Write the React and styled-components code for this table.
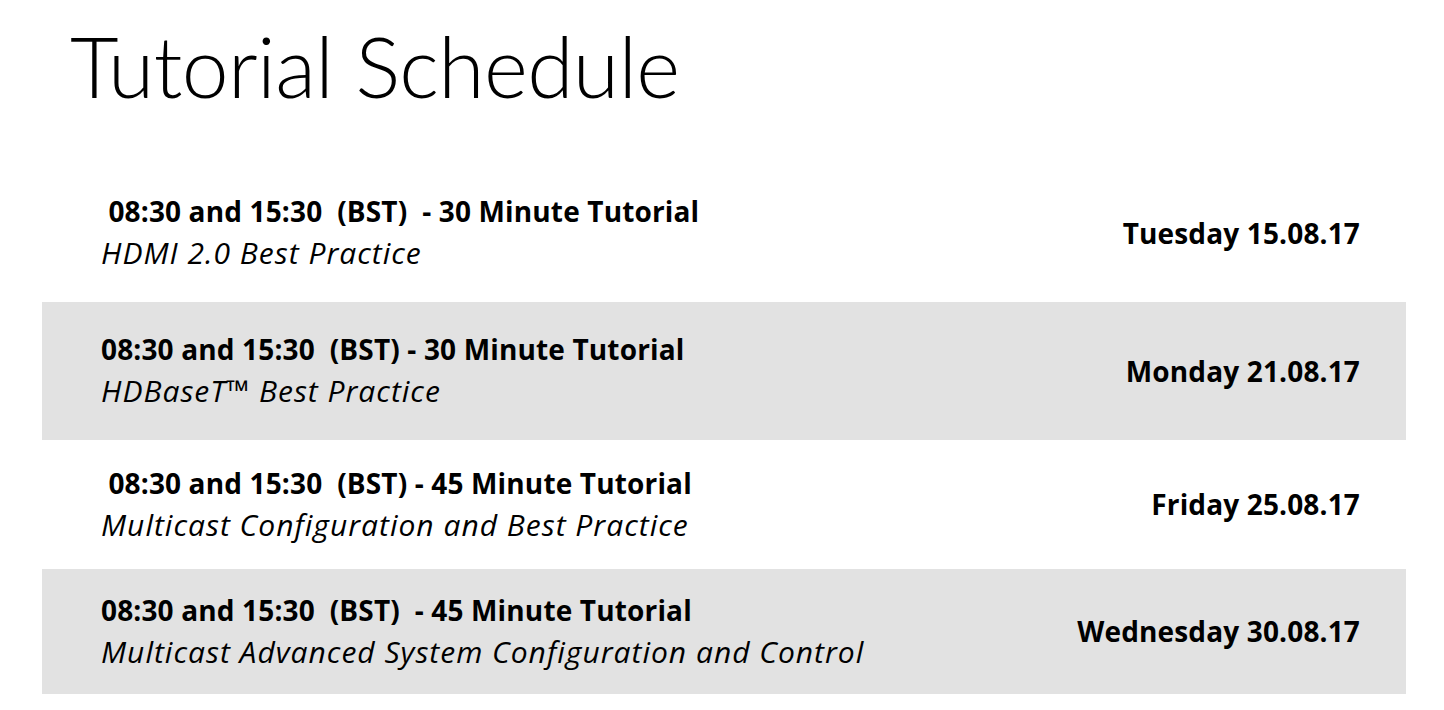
import React from "react";
import styled, { createGlobalStyle } from "styled-components";

const GlobalStyle = createGlobalStyle`
  html, body {
    margin: 0;
    padding: 0;
    background: #ffffff;
    color: #000000;
    font-family: "Open Sans", "Noto Sans", sans-serif;
  }
`;

const Page = styled.main`
  width: 1444px;
  min-height: 710px;
  background: #ffffff;
`;

const Header = styled.header`
  height: 164px;
  box-sizing: border-box;
  padding: 24px 0 0 70px;
`;

const Title = styled.h1`
  margin: 0;
  font-family: "Lato", "Open Sans", sans-serif;
  font-weight: 300;
  font-size: 84px;
  line-height: 84px;
  letter-spacing: -0.6px;
  color: #000000;
`;

const List = styled.section`
  display: flex;
  flex-direction: column;
  margin: 0 38px 0 42px;
`;

const Row = styled.div`
  display: flex;
  align-items: center;
  justify-content: space-between;
  height: ${(p) => p.$height}px;
  box-sizing: border-box;
  padding: 0 46px 0 59px;
  background: ${(p) => (p.$shaded ? "#e2e2e2" : "transparent")};
`;

const Info = styled.div`
  display: flex;
  flex-direction: column;
  padding-bottom: 2px;
`;

const Time = styled.div`
  font-weight: 700;
  font-size: 28px;
  line-height: 42px;
  letter-spacing: 0.15px;
  white-space: pre;
`;

const Topic = styled.div`
  font-style: italic;
  font-weight: 400;
  font-size: 30px;
  line-height: 42px;
  letter-spacing: 1px;
  white-space: pre;
`;

const DateLabel = styled.div`
  font-weight: 700;
  font-size: 28px;
  line-height: 43px;
  letter-spacing: 0.15px;
  white-space: pre;
`;

const sessions = [
  {
    time: " 08:30 and 15:30  (BST)  - 30 Minute Tutorial",
    topic: "HDMI 2.0 Best Practice",
    date: "Tuesday 15.08.17",
    height: 138,
  },
  {
    time: "08:30 and 15:30  (BST) - 30 Minute Tutorial",
    topic: "HDBaseT\u2122 Best Practice",
    date: "Monday 21.08.17",
    height: 138,
    shaded: true,
  },
  {
    time: " 08:30 and 15:30  (BST) - 45 Minute Tutorial",
    topic: "Multicast Configuration and Best Practice",
    date: "Friday 25.08.17",
    height: 129,
  },
  {
    time: "08:30 and 15:30  (BST)  - 45 Minute Tutorial",
    topic: "Multicast Advanced System Configuration and Control",
    date: "Wednesday 30.08.17",
    height: 125,
    shaded: true,
  },
];

export default function App() {
  return (
    <Page>
      <GlobalStyle />
      <Header>
        <Title>Tutorial Schedule</Title>
      </Header>
      <List>
        {sessions.map((s) => (
          <Row key={s.date} $shaded={s.shaded} $height={s.height}>
            <Info>
              <Time>{s.time}</Time>
              <Topic>{s.topic}</Topic>
            </Info>
            <DateLabel>{s.date}</DateLabel>
          </Row>
        ))}
      </List>
    </Page>
  );
}
